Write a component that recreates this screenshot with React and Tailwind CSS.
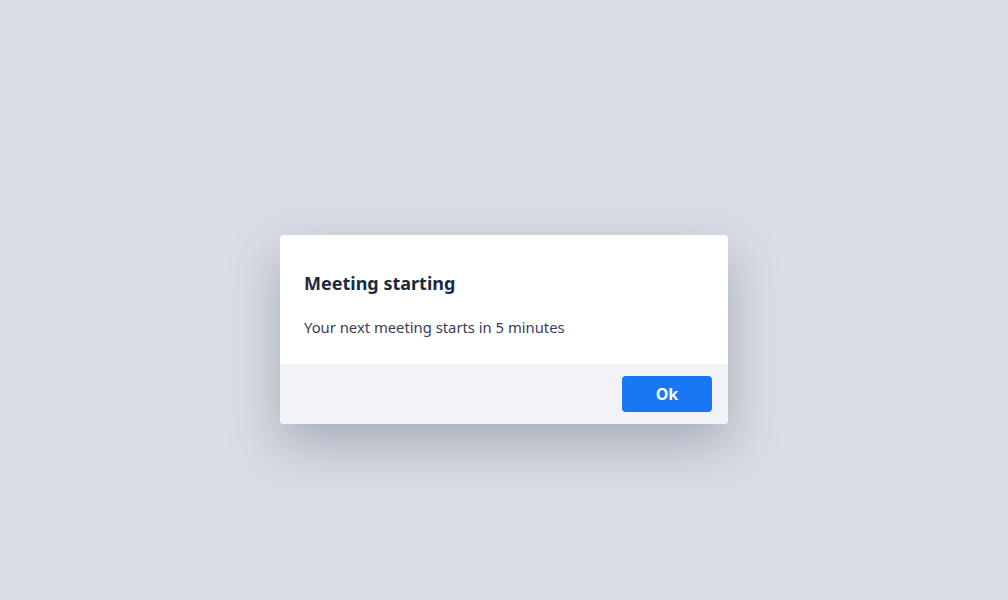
export default function App() {
  return (
    <div className="min-h-screen bg-[#d9dde4] flex justify-center pt-[235px] font-['Noto_Sans',sans-serif]">
      <div className="w-[448px] h-fit rounded bg-white overflow-hidden shadow-[0_20px_50px_rgba(71,85,105,0.35)]">
        <div className="px-6 pt-[34px] pb-[25px]">
          <h2 className="text-lg font-bold leading-7 text-[#1a2b40]">Meeting starting</h2>
          <p className="mt-[18px] text-[14.8px] leading-6 text-[#374151]">Your next meeting starts in 5 minutes</p>
        </div>
        <div className="bg-[#f2f3f6] flex justify-end px-4 py-3">
          <button className="w-[90px] h-9 rounded bg-[#1877f2] text-white font-bold text-base">Ok</button>
        </div>
      </div>
    </div>
  );
}
